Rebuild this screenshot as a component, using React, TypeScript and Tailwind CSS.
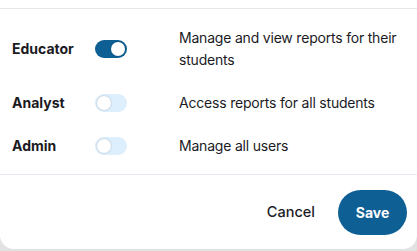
import React, { useState } from "react";

type Role = {
  name: string
  description: string
  enabled: boolean
}

const initialRoles: Role[] = [
  { name: "Educator", description: "Manage and view reports for their students", enabled: true },
  { name: "Analyst", description: "Access reports for all students", enabled: false },
  { name: "Admin", description: "Manage all users", enabled: false },
]

function Toggle({ on, onChange }: { on: boolean, onChange: () => void }) {
  return (
    <button
      onClick={onChange}
      className={"relative flex h-[18px] w-[32px] items-center rounded-full px-[2px] " + (on ? "bg-[#0d5f94] justify-end" : "bg-[#ddeefc] justify-start")}
    >
      <span className="block h-[14px] w-[14px] rounded-full bg-white shadow-[0_0_2px_rgba(0,0,0,0.25)]" />
    </button>
  )
}

export default function App() {
  const [roles, setRoles] = useState<Role[]>(initialRoles)

  const flip = (name: string) => {
    setRoles(rs => rs.map(r => (r.name === name ? { ...r, enabled: !r.enabled } : r)))
  }

  return (
    <div className="h-[251px] w-[417px] bg-[#e2e2e2] font-['Inter',sans-serif] text-[#1b1b1f]">
      <div className="flex h-[249px] flex-col rounded-b-[14px] bg-white">
        <div className="h-[9px] border-b border-[#e6e6e8]" />

        <div className="flex flex-col gap-[21px] pl-3 pr-2 pt-[18px] pb-[17px]">
          {roles.map(role => (
            <div key={role.name} className="grid grid-cols-[83px_84px_1fr] items-center">
              <span className="text-[14px] font-bold leading-[22px]">{role.name}</span>
              <div className="flex items-center">
                <Toggle on={role.enabled} onChange={() => flip(role.name)} />
              </div>
              <span className="text-[14px] leading-[22px] tracking-[-0.2px]">{role.description}</span>
            </div>
          ))}
        </div>

        <div className="flex flex-1 items-center justify-end gap-[23px] border-t border-[#e9e7f0] px-[10px]">
          <button className="text-[14.5px] font-medium">Cancel</button>
          <button className="h-[45px] w-[69px] rounded-full bg-[#0d5f94] text-[14px] font-bold text-white">
            Save
          </button>
        </div>
      </div>
    </div>
  )
}
